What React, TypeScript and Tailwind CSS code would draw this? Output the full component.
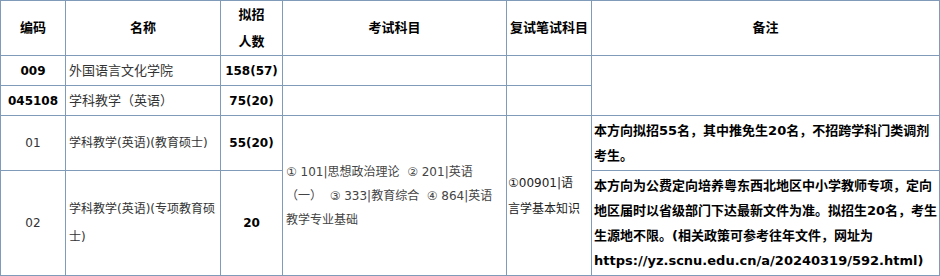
import React from "react";

const cell = "border border-[#7f9bb9] p-0 align-middle";

export default function App() {
  return (
    <div className="w-[940px] h-[276px] bg-white">
      <table className="table-fixed border-collapse w-[939px] font-['DejaVu_Sans','Noto_Sans_CJK_SC',sans-serif] text-[#333]">
        <colgroup>
          <col className="w-[65px]" />
          <col className="w-[155px]" />
          <col className="w-[62px]" />
          <col className="w-[224px]" />
          <col className="w-[85px]" />
          <col className="w-[348px]" />
        </colgroup>
        <thead>
          <tr className="h-[55px] text-[13px] font-bold text-black">
            <th className={cell}>编码</th>
            <th className={cell}>名称</th>
            <th className={`${cell} leading-[27px]`}>
              拟招
              <br />
              人数
            </th>
            <th className={cell}>考试科目</th>
            <th className={`${cell} whitespace-nowrap`}>复试笔试科目</th>
            <th className={cell}>备注</th>
          </tr>
        </thead>
        <tbody>
          <tr className="h-[30px]">
            <td className={`${cell} text-center text-[12px] font-bold text-black`}>009</td>
            <td className={`${cell} px-[3px] text-[13px]`}>外国语言文化学院</td>
            <td className={`${cell} text-center text-[12px] font-bold text-black`}>158(57)</td>
            <td className={cell}></td>
            <td className={cell}></td>
            <td className={cell} rowSpan={2}></td>
          </tr>
          <tr className="h-[30px]">
            <td className={`${cell} text-center text-[12px] font-bold text-black`}>045108</td>
            <td className={`${cell} px-[3px] text-[13px]`}>学科教学（英语）</td>
            <td className={`${cell} text-center text-[12px] font-bold text-black`}>75(20)</td>
            <td className={cell}></td>
            <td className={cell}></td>
          </tr>
          <tr className="h-[55px]">
            <td className={`${cell} text-center text-[12px]`}>01</td>
            <td className={`${cell} px-[3px] text-[12px] whitespace-nowrap`}>学科教学(英语)(教育硕士)</td>
            <td className={`${cell} text-center text-[12px] font-bold text-black`}>55(20)</td>
            <td className={`${cell} px-[3px] text-[12px] leading-[24px] text-[#444]`} rowSpan={2}>
              <div className="whitespace-nowrap">① 101|思想政治理论&nbsp;&nbsp;② 201|英语</div>
              <div className="whitespace-nowrap">（一）&nbsp;&nbsp;③ 333|教育综合&nbsp;&nbsp;④ 864|英语</div>
              <div className="whitespace-nowrap">教学专业基础</div>
            </td>
            <td className={`${cell} px-[1px] text-[12px] leading-[26px] text-[#222]`} rowSpan={2}>
              <div className="whitespace-nowrap">①00901|语</div>
              <div className="whitespace-nowrap">言学基本知识</div>
            </td>
            <td className={`${cell} px-[2px] text-[13px] font-bold leading-[25px] text-black`}>
              <div className="whitespace-nowrap">本方向拟招55名，其中推免生20名，不招跨学科门类调剂</div>
              <div>考生。</div>
            </td>
          </tr>
          <tr className="h-[105px]">
            <td className={`${cell} text-center text-[12px]`}>02</td>
            <td className={`${cell} px-[3px] text-[12px] leading-[28px]`}>
              <div className="whitespace-nowrap">学科教学(英语)(专项教育硕</div>
              <div>士)</div>
            </td>
            <td className={`${cell} text-center text-[12px] font-bold text-black`}>20</td>
            <td className={`${cell} px-[2px] text-[13px] font-bold leading-[25px] text-black`}>
              <div className="whitespace-nowrap">本方向为公费定向培养粤东西北地区中小学教师专项，定向</div>
              <div className="whitespace-nowrap">地区届时以省级部门下达最新文件为准。拟招生20名，考生</div>
              <div className="whitespace-nowrap">生源地不限。(相关政策可参考往年文件，网址为</div>
              <div className="whitespace-nowrap">https://yz.scnu.edu.cn/a/20240319/592.html)</div>
            </td>
          </tr>
        </tbody>
      </table>
    </div>
  );
}
